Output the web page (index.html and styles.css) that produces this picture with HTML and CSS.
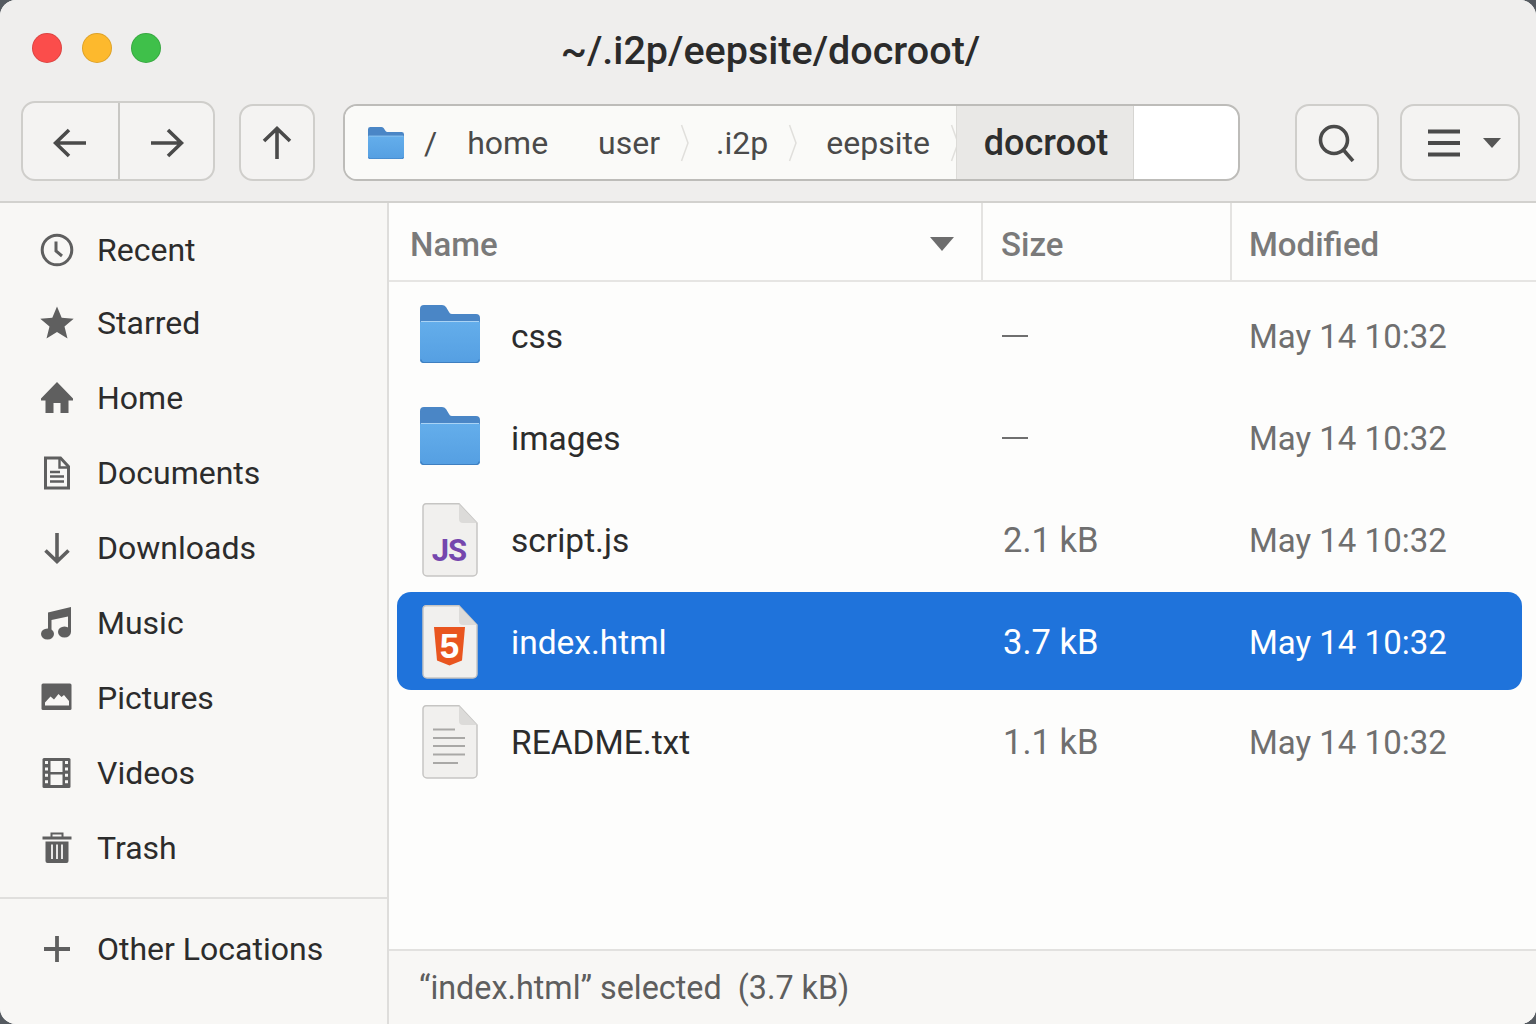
FILE: index.html
```html
<!DOCTYPE html>
<html lang="en">
<head>
    <meta charset="UTF-8">
    <meta name="viewport" content="width=device-width, initial-scale=1.0">
    <title>~/.i2p/eepsite/docroot/</title>
    <link rel="stylesheet" href="styles.css">
</head>
<body>
<svg class="defs" width="0" height="0">
    <defs>
        <linearGradient id="folderFront" x1="0" y1="0" x2="0" y2="1">
            <stop offset="0" stop-color="#64aeeb"/>
            <stop offset="1" stop-color="#559fe2"/>
        </linearGradient>
        <symbol id="folder" viewBox="0 0 60 58" preserveAspectRatio="none">
            <path d="M0 4a4 4 0 0 1 4-4h18a5 5 0 0 1 4 2l3 5a3 3 0 0 0 3 2h24a4 4 0 0 1 4 4v41a4 4 0 0 1-4 4H4a4 4 0 0 1-4-4z" fill="#4a86c6"/>
            <path d="M0 18a2 2 0 0 1 2-2h56a2 2 0 0 1 2 2v36a4 4 0 0 1-4 4H4a4 4 0 0 1-4-4z" fill="url(#folderFront)"/>
            <path d="M1 16.5h58" stroke="#a9d3f5" stroke-width="1"/>
            <path d="M1 54.5a3 3 0 0 0 3 3h52a3 3 0 0 0 3-3" fill="none" stroke="#3f7fc0" stroke-width="1.2"/>
        </symbol>
        <symbol id="page" viewBox="0 0 56 74">
            <path d="M4 .8h33L55 20v49a4 4 0 0 1-4 4H5a4 4 0 0 1-4-4V4a3 3 0 0 1 3-3.200z" fill="#f1f0ee" stroke="#c6c5c3" stroke-width="1.500"/>
            <path d="M37 1v15a4 4 0 0 0 4 4h14z" fill="#dcdbd9"/>
        </symbol>
    </defs>
</svg>

<div class="window">
    <header class="header">
        <div class="titlebar">
            <div class="dots">
                <span class="dot dot-red"></span>
                <span class="dot dot-yellow"></span>
                <span class="dot dot-green"></span>
            </div>
            <h1 class="title">~/.i2p/eepsite/docroot/</h1>
        </div>
        <div class="toolbar">
            <div class="tool-group">
                <button class="tool-btn nav-btn">
                    <svg width="34" height="30" viewBox="0 0 34 30" class="stroke-icon"><path d="M33 15H3M16 2 2.500 15 16 28"/></svg>
                </button>
                <button class="tool-btn nav-btn">
                    <svg width="34" height="30" viewBox="0 0 34 30" class="stroke-icon"><path d="M1 15h30M18 2l13.500 13L18 28"/></svg>
                </button>
            </div>
            <button class="tool-btn up-btn">
                <svg width="30" height="34" viewBox="0 0 30 34" class="stroke-icon"><path d="M15 33V3M2 15 15 2.500 28 15"/></svg>
            </button>
            <nav class="pathbar">
                <div class="crumbs">
                    <svg class="crumb-folder" width="36" height="32"><use href="#folder" width="36" height="32"/></svg>
                    <span class="crumb crumb-root">/</span>
                    <span class="crumb crumb-home">home</span>
                    <span class="crumb crumb-user">user</span>
                    <svg class="crumb-sep" width="10" height="38" viewBox="0 0 10 38"><path d="M1.500 1 8 19 1.500 37"/></svg>
                    <span class="crumb">.i2p</span>
                    <svg class="crumb-sep crumb-sep-wide" width="10" height="38" viewBox="0 0 10 38"><path d="M1.500 1 8 19 1.500 37"/></svg>
                    <span class="crumb">eepsite</span>
                    <svg class="crumb-sep crumb-sep-last" width="10" height="38" viewBox="0 0 10 38"><path d="M1.500 1 8 19 1.500 37"/></svg>
                </div>
                <div class="crumb-current">docroot</div>
            </nav>
            <button class="tool-btn search-btn">
                <svg width="40" height="38" viewBox="0 0 40 38" class="stroke-icon"><circle cx="17" cy="16" r="13.500"/><path d="m26.500 26 9.500 11"/></svg>
            </button>
            <button class="tool-btn menu-btn">
                <svg width="34" height="28" viewBox="0 0 34 28" class="stroke-icon bars"><path d="M1 2.500h32M1 14h32M1 25.500h32"/></svg>
                <span class="menu-caret"></span>
            </button>
        </div>
    </header>

    <div class="content">
        <aside class="sidebar">
            <ul class="places">
                <li class="place">
                    <svg class="place-icon" viewBox="0 0 34 34"><circle cx="17" cy="17" r="14.800" fill="none" stroke="#5f5f5f" stroke-width="3"/><path d="M16 8.500V18l6 5" fill="none" stroke="#5f5f5f" stroke-width="3"/></svg>
                    <span>Recent</span>
                </li>
                <li class="place">
                    <svg class="place-icon" viewBox="0 0 34 34"><path d="M17 .5l4.700 11.300 12 .9-9.200 7.900 3 11.900L17 26l-10.500 6.500 3-11.900L.3 12.700l12-.9z" fill="#5f5f5f"/></svg>
                    <span>Starred</span>
                </li>
                <li class="place">
                    <svg class="place-icon" viewBox="0 0 34 34"><path d="M17 1 33 17.500v2h-4.500V32H20.500V22h-7v10H5.500V19.500H1v-2z" fill="#5f5f5f"/></svg>
                    <span>Home</span>
                </li>
                <li class="place">
                    <svg class="place-icon" viewBox="0 0 34 34"><path d="M5.500 2h15l8 8.500V32h-23z" fill="none" stroke="#5f5f5f" stroke-width="3"/><path d="M19.500 2v9.500h9M10 16h10M10 20.500h14M10 25.500h14" fill="none" stroke="#5f5f5f" stroke-width="2.400"/></svg>
                    <span>Documents</span>
                </li>
                <li class="place">
                    <svg class="place-icon" viewBox="0 0 34 34"><path d="M17 2v28M5.500 19.500 17 30.500l11.500-11" fill="none" stroke="#5f5f5f" stroke-width="3.600"/></svg>
                    <span>Downloads</span>
                </li>
                <li class="place">
                    <svg class="place-icon" viewBox="0 0 34 34"><path d="M8 6.500 31 1v25h-3V10.500L11.500 14v17H8z" fill="#5f5f5f"/><ellipse cx="7.500" cy="28" rx="6.500" ry="5.500" fill="#5f5f5f"/><ellipse cx="24.500" cy="26" rx="6.500" ry="5.500" fill="#5f5f5f"/></svg>
                    <span>Music</span>
                </li>
                <li class="place">
                    <svg class="place-icon" viewBox="0 0 34 34"><rect x="1.500" y="2.500" width="30" height="26.500" rx="1.500" fill="#5f5f5f"/><path d="M5 24.500v-3l5.500-6 3.500 3 4.500-5.500 3 3 2.500-2 5 6v4.500z" fill="#f8f7f5"/></svg>
                    <span>Pictures</span>
                </li>
                <li class="place">
                    <svg class="place-icon" viewBox="0 0 34 34"><rect x="2.500" y="2" width="28" height="30" rx="1.500" fill="#5f5f5f"/><rect x="10.500" y="5" width="12" height="11" fill="#f8f7f5"/><rect x="10.500" y="18.500" width="12" height="10.500" fill="#f8f7f5"/><path d="M6.500 5v25M26.500 5v25" stroke="#f8f7f5" stroke-width="3" stroke-dasharray="3 3.400"/></svg>
                    <span>Videos</span>
                </li>
                <li class="place">
                    <svg class="place-icon" viewBox="0 0 34 34"><path d="M2.500 7h29" stroke="#5f5f5f" stroke-width="3"/><path d="M11.500 6V2.500h11V6" fill="none" stroke="#5f5f5f" stroke-width="2"/><path d="M5.500 10.500h23V30a2 2 0 0 1-2 2h-19a2 2 0 0 1-2-2z" fill="#5f5f5f"/><path d="M12 13.500V28M17 13.500V28M22 13.500V28" stroke="#f8f7f5" stroke-width="1.800"/></svg>
                    <span>Trash</span>
                </li>
            </ul>
            <div class="places-sep"></div>
            <div class="place">
                <svg class="place-icon" viewBox="0 0 34 34"><path d="M17 4v26M4 17h26" stroke="#5f5f5f" stroke-width="3.800"/></svg>
                <span>Other Locations</span>
            </div>
        </aside>

        <main class="main">
            <div class="columns">
                <div class="col col-name">Name<span class="sort-caret"></span></div>
                <div class="col col-size">Size</div>
                <div class="col col-modified">Modified</div>
            </div>
            <div class="files">
                <div class="file">
                    <div class="file-icon"><svg class="folder-icon" width="60" height="58"><use href="#folder" width="60" height="58"/></svg></div>
                    <div class="file-name">css</div>
                    <div class="file-size"><span class="dash"></span></div>
                    <div class="file-date">May 14 10:32</div>
                </div>
                <div class="file">
                    <div class="file-icon"><svg class="folder-icon" width="60" height="58"><use href="#folder" width="60" height="58"/></svg></div>
                    <div class="file-name">images</div>
                    <div class="file-size"><span class="dash"></span></div>
                    <div class="file-date">May 14 10:32</div>
                </div>
                <div class="file">
                    <div class="file-icon">
                        <svg width="56" height="74" viewBox="0 0 56 74">
                            <use href="#page" width="56" height="74"/>
                            <text class="js-label" x="27" y="58">JS</text>
                        </svg>
                    </div>
                    <div class="file-name">script.js</div>
                    <div class="file-size">2.1 kB</div>
                    <div class="file-date">May 14 10:32</div>
                </div>
                <div class="file file-selected">
                    <div class="file-icon">
                        <svg width="56" height="74" viewBox="0 0 56 74">
                            <use href="#page" width="56" height="74"/>
                            <path d="M12 22h31l-3 33.500-12.500 5-12.500-5z" fill="#e9551f"/>
                            <text class="html-label" x="27.500" y="53">5</text>
                        </svg>
                    </div>
                    <div class="file-name">index.html</div>
                    <div class="file-size">3.7 kB</div>
                    <div class="file-date">May 14 10:32</div>
                </div>
                <div class="file file-last">
                    <div class="file-icon">
                        <svg width="56" height="74" viewBox="0 0 56 74">
                            <use href="#page" width="56" height="74"/>
                            <path d="M11 24.500h22M11 33h32M11 41h32M11 49.500h32M11 58h25" stroke="#a9a8a6" stroke-width="2"/>
                        </svg>
                    </div>
                    <div class="file-name">README.txt</div>
                    <div class="file-size">1.1 kB</div>
                    <div class="file-date">May 14 10:32</div>
                </div>
            </div>
            <footer class="statusbar">“index.html” selected&nbsp; (3.7 kB)</footer>
        </main>
    </div>
</div>
</body>
</html>
```

FILE: styles.css
```css
* {
    box-sizing: border-box;
    margin: 0;
    padding: 0;
    font-family: 'Roboto', sans-serif;
}
body {
    width: 1536px;
    height: 1024px;
    background: #555a60;
    overflow: hidden;
}
.defs {
    display: block;
    height: 0;
}
.window {
    height: 1024px;
    display: flex;
    flex-direction: column;
    border-radius: 16px;
    overflow: hidden;
    background: #f8f7f5;
}
.header {
    height: 203px;
    flex: none;
    background: #efeeed;
    border-bottom: 2px solid #d2d1ce;
}
.titlebar {
    height: 101px;
    display: flex;
    align-items: center;
    justify-content: center;
    position: relative;
}
.dots {
    position: absolute;
    left: 32px;
    top: 33px;
    display: flex;
    gap: 19.500px;
}
.dot {
    width: 30px;
    height: 30px;
    border-radius: 50%;
    border: 1px solid rgba(0, 0, 0, 0.12);
}
.dot-red { background: #fb4d4b; }
.dot-yellow { background: #fdb92d; }
.dot-green { background: #3fc04a; }
.title {
    font-size: 39.500px;
    font-weight: 500;
    color: #2b2b2b;
    margin-left: 5px;
}
.toolbar {
    height: 80px;
    display: flex;
    align-items: flex-end;
    padding-left: 21px;
}
button {
    display: flex;
    align-items: center;
    justify-content: center;
}
.tool-btn {
    height: 77px;
    background: #f4f3f2;
    border: 2px solid #cfcecb;
    border-radius: 14px;
}
.stroke-icon {
    fill: none;
    stroke: #4a4a4a;
    stroke-width: 3.600;
}
.tool-group {
    display: flex;
    height: 80px;
    width: 194px;
    background: #f4f3f2;
    border: 2px solid #cfcecb;
    border-radius: 14px;
}
.nav-btn {
    height: 100%;
    padding-top: 3px;
    border: none;
    background: transparent;
    border-radius: 0;
    width: 96px;
}
.nav-btn + .nav-btn {
    border-left: 2px solid #c8c7c4;
    padding-left: 2px;
}
.up-btn {
    width: 76px;
    margin-left: 24px;
}
.pathbar {
    width: 897px;
    height: 77px;
    margin-left: 28px;
    display: flex;
    background: #fff;
    border: 2px solid #bdbcb9;
    border-radius: 14px;
    overflow: hidden;
    font-size: 32px;
    color: #4a4a4a;
}
.crumbs {
    width: 611px;
    flex: none;
    display: flex;
    align-items: center;
    padding-left: 23px;
    background: #fafaf8;
}
.crumb-folder {
    flex: none;
    margin-right: 20px;
}
.crumb-root {
    margin-right: 30px;
}
.crumb-home {
    margin-right: 50px;
}
.crumb-sep {
    flex: none;
    margin: 0 26px 0 20px;
    fill: none;
    stroke: #e0dfdc;
    stroke-width: 1.500;
}
.crumb-sep-wide {
    margin-right: 28px;
}
.crumb-sep-last {
    margin-right: 0;
}
.crumb-current {
    width: 178px;
    flex: none;
    display: flex;
    align-items: center;
    justify-content: center;
    padding-left: 2px;
    background: #e9e8e6;
    border-left: 1px solid #dcdbd8;
    border-right: 1px solid #d6d5d2;
    font-size: 36px;
    font-weight: 500;
    color: #2e2e2e;
}
.search-btn {
    width: 84px;
    margin-left: 55px;
}
.menu-btn {
    width: 120px;
    margin-left: 21px;
    justify-content: flex-start;
    padding-left: 25px;
    gap: 22px;
}
.bars {
    stroke-width: 4;
}
.menu-caret {
    width: 0;
    height: 0;
    border-left: 9px solid transparent;
    border-right: 9px solid transparent;
    border-top: 10px solid #555;
}
.content {
    flex: 1;
    display: flex;
    min-height: 0;
}
.sidebar {
    width: 389px;
    flex: none;
    background: #f8f7f5;
    border-right: 2px solid #dedddb;
}
.places {
    list-style: none;
    padding-top: 11px;
}
.place {
    height: 75px;
    display: flex;
    align-items: center;
    gap: 23px;
    padding-left: 40px;
    font-size: 32px;
    color: #2c2c2c;
}
.places .place:first-child {
    height: 71px;
}
.place-icon {
    width: 34px;
    height: 34px;
    flex: none;
}
.places-sep {
    height: 2px;
    margin: 12px 0 12px;
    background: #e0dfdd;
}
.main {
    flex: 1;
    display: flex;
    flex-direction: column;
    min-width: 0;
    background: #fdfdfc;
}
.columns {
    height: 79px;
    flex: none;
    display: flex;
    border-bottom: 2px solid #e6e5e3;
    font-size: 33px;
    font-weight: 500;
    color: #7a7a7a;
}
.col {
    display: flex;
    align-items: center;
    padding-top: 6px;
}
.col-name {
    width: 594px;
    justify-content: space-between;
    padding-left: 21px;
    padding-right: 27px;
    border-right: 2px solid #e4e3e1;
}
.col-size {
    width: 249px;
    padding-left: 18px;
    border-right: 2px solid #e4e3e1;
}
.col-modified {
    padding-left: 17px;
}
.sort-caret {
    width: 0;
    height: 0;
    margin-top: -2px;
    border-left: 12px solid transparent;
    border-right: 12px solid transparent;
    border-top: 14px solid #6d6d6d;
}
.files {
    flex: 1;
    padding: 4px 14px 0 8px;
    display: flex;
    flex-direction: column;
    gap: 4px;
}
.file {
    height: 98px;
    padding-top: 2px;
    display: grid;
    grid-template-columns: 114px 492px 246px 1fr;
    align-items: center;
    border-radius: 14px;
}
.file-last {
    margin-top: -2px;
}
.file-icon {
    display: flex;
    justify-content: center;
    padding-left: 23px;
    padding-right: 31px;
}
.file-icon svg {
    flex: none;
}
.folder-icon {
    margin-top: -4px;
}
.file-name {
    font-size: 33.500px;
    color: #2c2c2c;
}
.file-size {
    font-size: 34.500px;
    color: #6f6f6f;
}
.file-date {
    font-size: 33px;
    color: #6f6f6f;
}
.dash {
    display: block;
    width: 26px;
    height: 2px;
    margin-left: -1px;
    background: #6f6f6f;
}
.file-selected {
    background: #1f73db;
}
.file-selected .file-name,
.file-selected .file-size,
.file-selected .file-date {
    color: #fff;
}
.js-label {
    font-size: 31px;
    font-weight: 700;
    letter-spacing: -1px;
    fill: #7547ad;
    text-anchor: middle;
}
.html-label {
    font-family: 'Liberation Sans', sans-serif;
    font-size: 35px;
    font-weight: 700;
    fill: #fff;
    text-anchor: middle;
}
.statusbar {
    height: 75px;
    flex: none;
    display: flex;
    align-items: center;
    padding-left: 30px;
    background: #f8f7f5;
    border-top: 2px solid #e2e1df;
    font-size: 32.300px;
    color: #5e5e5e;
}
```
